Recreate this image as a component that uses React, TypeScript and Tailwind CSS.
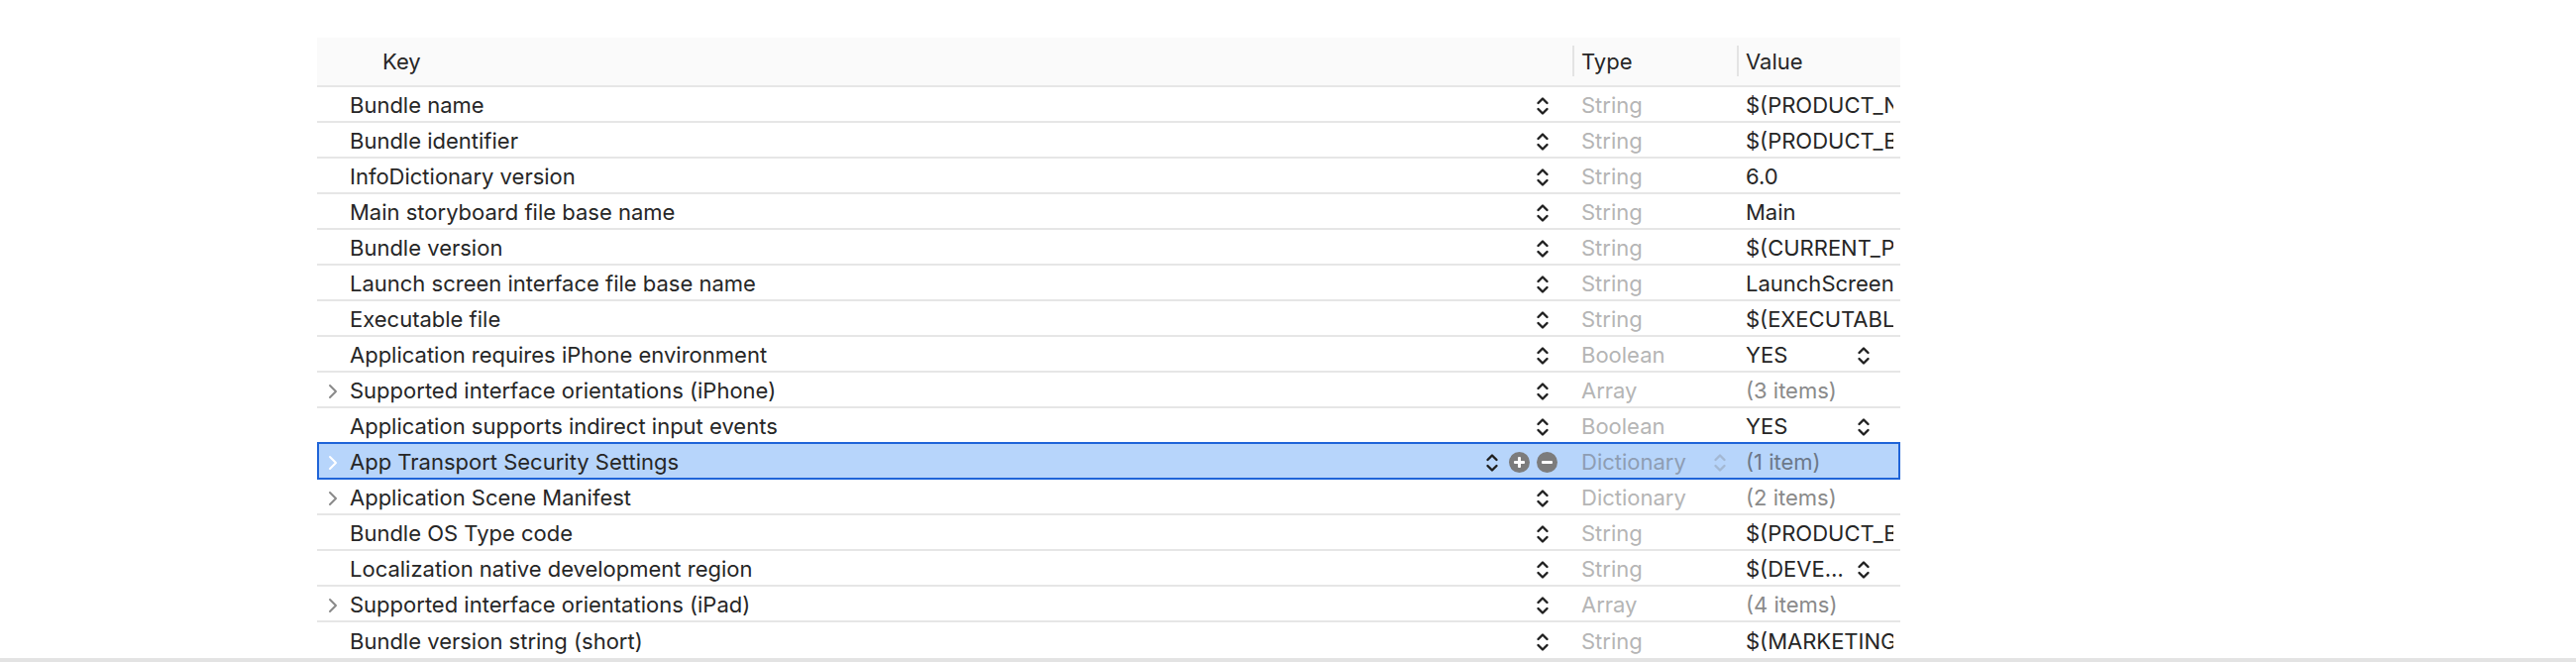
import React from "react";

type Row = {
  key: string;
  type: string;
  value: string;
  expandable?: boolean;
  muted?: boolean;
  popup?: boolean;
  selected?: boolean;
};

const rows: Row[] = [
  { key: "Bundle name", type: "String", value: "$(PRODUCT_NAME)" },
  { key: "Bundle identifier", type: "String", value: "$(PRODUCT_BUNDLE_IDENTIFIER)" },
  { key: "InfoDictionary version", type: "String", value: "6.0" },
  { key: "Main storyboard file base name", type: "String", value: "Main" },
  { key: "Bundle version", type: "String", value: "$(CURRENT_PROJECT_VERSION)" },
  { key: "Launch screen interface file base name", type: "String", value: "LaunchScreen" },
  { key: "Executable file", type: "String", value: "$(EXECUTABLE_NAME)" },
  { key: "Application requires iPhone environment", type: "Boolean", value: "YES", popup: true },
  { key: "Supported interface orientations (iPhone)", type: "Array", value: "(3 items)", expandable: true, muted: true },
  { key: "Application supports indirect input events", type: "Boolean", value: "YES", popup: true },
  { key: "App Transport Security Settings", type: "Dictionary", value: "(1 item)", expandable: true, muted: true, selected: true },
  { key: "Application Scene Manifest", type: "Dictionary", value: "(2 items)", expandable: true, muted: true },
  { key: "Bundle OS Type code", type: "String", value: "$(PRODUCT_BUNDLE_PACKAGE_TYPE)" },
  { key: "Localization native development region", type: "String", value: "$(DEVE…", popup: true },
  { key: "Supported interface orientations (iPad)", type: "Array", value: "(4 items)", expandable: true, muted: true },
  { key: "Bundle version string (short)", type: "String", value: "$(MARKETING_VERSION)" },
];

function Stepper({ color = "#1f1f1f" }: { color?: string }) {
  return (
    <svg width="14" height="22" viewBox="0 0 14 22" fill="none" stroke={color} strokeWidth="2.4" strokeLinecap="round" strokeLinejoin="round">
      <path d="M2.5 8 L7 3.5 L11.5 8" />
      <path d="M2.5 14 L7 18.5 L11.5 14" />
    </svg>
  );
}

function Disclosure({ color }: { color: string }) {
  return (
    <svg width="12" height="16" viewBox="0 0 12 16" fill="none" stroke={color} strokeWidth="2" strokeLinecap="round" strokeLinejoin="round">
      <path d="M3 2 L9 8 L3 14" />
    </svg>
  );
}

function RoundButton({ minus }: { minus?: boolean }) {
  return (
    <svg width="21" height="21" viewBox="0 0 21 21">
      <circle cx="10.5" cy="10.5" r="10.5" fill="#7c7c7c" />
      <rect x="5" y="9" width="11" height="3" rx="1" fill="#ffffff" />
      {!minus && <rect x="9" y="5" width="3" height="11" rx="1" fill="#ffffff" />}
    </svg>
  );
}

function PlistRow({ row, last }: { row: Row; last: boolean }) {
  const rowClass = row.selected
    ? "-mt-[2px] h-[38px] border-2 border-[#1f64d8] bg-[#b7d5fb]"
    : last
      ? "h-[36px]"
      : "h-[36px] border-b-2 border-[#e6e6e6]";

  return (
    <div className={`flex items-center pt-[3px] ${rowClass}`}>
      <div className={`flex h-full w-[1267px] shrink-0 items-center ${row.selected ? "-ml-[2px]" : ""}`}>
        <div className="flex w-[33px] shrink-0 justify-start pl-[10px]">
          {row.expandable && <Disclosure color={row.selected ? "#ffffff" : "#8a8a8a"} />}
        </div>
        <span className="flex-1 truncate text-[22px] text-[#262626]">{row.key}</span>
        {row.selected ? (
          <div className="mr-[15px] flex items-center">
            <Stepper />
            <div className="ml-[10px] flex items-center gap-[7px]">
              <RoundButton />
              <RoundButton minus />
            </div>
          </div>
        ) : (
          <div className="mr-[23px] flex items-center">
            <Stepper />
          </div>
        )}
      </div>
      <div className="flex h-full w-[166px] shrink-0 items-center pl-[9px]">
        <span className={`flex-1 text-[22px] ${row.selected ? "text-[#8e9db3]" : "text-[#b5b5b5]"}`}>{row.type}</span>
        {row.selected && (
          <div className="mr-[10px]">
            <Stepper color="#a3b8d3" />
          </div>
        )}
      </div>
      <div className="flex h-full min-w-0 flex-1 items-center overflow-hidden pl-[9px] pr-[7px]">
        <span
          className={`overflow-hidden whitespace-nowrap text-[22px] ${row.popup ? "w-[112px] shrink-0" : "flex-1"} ${
            row.muted ? (row.selected ? "text-[#6c7888]" : "text-[#8a8a8a]") : "text-[#262626]"
          }`}
          style={{ textOverflow: "clip" }}
        >
          {row.value}
        </span>
        {row.popup && <Stepper />}
      </div>
    </div>
  );
}

export default function App() {
  return (
    <div className="flex h-[668px] w-full flex-col bg-white font-['Inter','Noto_Sans',sans-serif]">
      <div className="ml-[320px] mt-[38px] w-[1598px]">
        <div className="flex h-[50px] items-center border-b-2 border-[#e6e6e6] bg-[#fafafa] text-[22px] text-[#262626]">
          <div className="w-[1267px] shrink-0 pl-[66px]">Key</div>
          <div className="flex h-full w-[166px] shrink-0 items-center border-l-2 border-[#e4e4e4] pl-[7px] [border-image:linear-gradient(to_bottom,transparent_18%,#e4e4e4_18%,#e4e4e4_80%,transparent_80%)_1]">
            Type
          </div>
          <div className="flex h-full flex-1 items-center border-l-2 border-[#e4e4e4] pl-[7px] [border-image:linear-gradient(to_bottom,transparent_18%,#e4e4e4_18%,#e4e4e4_80%,transparent_80%)_1]">
            Value
          </div>
        </div>
        {rows.map((row, i) => (
          <PlistRow key={row.key} row={row} last={i === rows.length - 1} />
        ))}
      </div>
      <div className="mt-auto h-[4px] w-full bg-[#e3e3e3]" />
    </div>
  );
}
